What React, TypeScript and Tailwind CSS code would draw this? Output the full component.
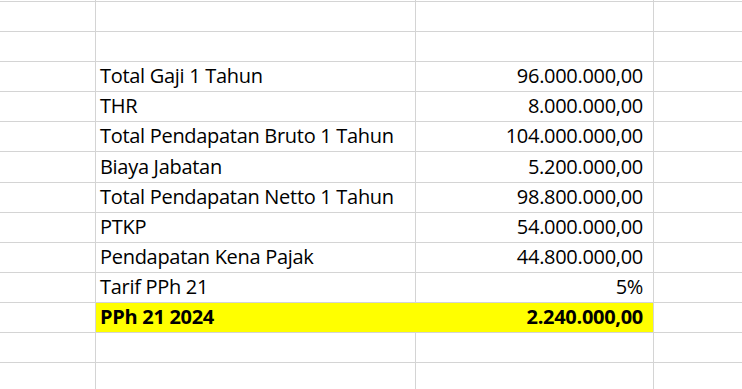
import React from 'react';

type Row = { label?: string; value?: string; bold?: boolean; tall?: boolean };

const rows: Row[] = [
    {},
    {},
    { label: 'Total Gaji 1 Tahun', value: '96.000.000,00' },
    { label: 'THR', value: '8.000.000,00' },
    { label: 'Total Pendapatan Bruto 1 Tahun', value: '104.000.000,00' },
    { label: 'Biaya Jabatan', value: '5.200.000,00', tall: true },
    { label: 'Total Pendapatan Netto 1 Tahun', value: '98.800.000,00' },
    { label: 'PTKP', value: '54.000.000,00' },
    { label: 'Pendapatan Kena Pajak', value: '44.800.000,00' },
    { label: 'Tarif PPh 21', value: '5%' },
    { label: 'PPh 21 2024', value: '2.240.000,00', bold: true },
    {},
    {},
];

export default function App() {
    return (
        <div
            className="w-[742px] h-[389px] overflow-hidden bg-white text-black text-[20px]"
            style={{ fontFamily: '"Open Sans", sans-serif' }}
        >
            {/* partial row above */}
            <div className="flex h-[2px] border-b border-[#d4d4d4]">
                <div className="w-[96px] border-r border-[#d4d4d4]" />
                <div className="w-[320px] border-r border-[#d4d4d4]" />
                <div className="w-[238px] border-r border-[#d4d4d4]" />
                <div className="flex-1" />
            </div>
            {rows.map((r, i) => (
                <div
                    key={i}
                    className={`flex border-b border-[#d4d4d4] ${r.tall ? 'h-[31px]' : 'h-[30px]'} ${r.bold ? 'font-bold' : ''}`}
                >
                    <div className="w-[96px] shrink-0 border-r border-[#d4d4d4]" />
                    <div
                        className={`w-[320px] shrink-0 border-r flex items-end pl-[4px] pb-[1px] leading-none whitespace-nowrap ${
                            r.bold ? 'bg-[#ffff00] border-[#ffff00]' : 'border-[#d4d4d4]'
                        }`}
                    >
                        <span className="tracking-[-0.3px] pb-[4px]">{r.label}</span>
                    </div>
                    <div
                        className={`w-[238px] shrink-0 border-r border-[#d4d4d4] flex items-end justify-end pr-[10px] pb-[1px] leading-none whitespace-nowrap ${
                            r.bold ? 'bg-[#ffff00]' : ''
                        }`}
                    >
                        <span className="tracking-[-0.3px] pb-[4px]">{r.value}</span>
                    </div>
                    <div className="flex-1" />
                </div>
            ))}
        </div>
    );
}
